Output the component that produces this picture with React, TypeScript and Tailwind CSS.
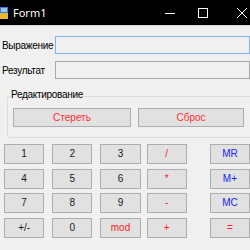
import React from "react";

const Btn = ({ label, color, className }: { label: string; color: string; className?: string }) => (
  <div
    className={`h-[20px] w-[41px] bg-[#e1e1e1] border border-[#adadad] flex items-center justify-center text-[10px] leading-none ${color} ${className ?? ""}`}
  >
    {label}
  </div>
);

export default function App() {
  const rows: { label: string; color: string }[][] = [
    [
      { label: "1", color: "text-[#1a1040]" },
      { label: "2", color: "text-[#1a1a1a]" },
      { label: "3", color: "text-[#1a1a1a]" },
      { label: "/", color: "text-[#ff2020]" },
      { label: "MR", color: "text-[#2020ff]" },
    ],
    [
      { label: "4", color: "text-[#1a1a1a]" },
      { label: "5", color: "text-[#1a1a1a]" },
      { label: "6", color: "text-[#1a1a1a]" },
      { label: "*", color: "text-[#ff2020]" },
      { label: "M+", color: "text-[#2020ff]" },
    ],
    [
      { label: "7", color: "text-[#1a1a1a]" },
      { label: "8", color: "text-[#1a1a1a]" },
      { label: "9", color: "text-[#1a1a1a]" },
      { label: "-", color: "text-[#ff2020]" },
      { label: "MC", color: "text-[#2020ff]" },
    ],
    [
      { label: "+/-", color: "text-[#1a1a1a]" },
      { label: "0", color: "text-[#1a1a1a]" },
      { label: "mod", color: "text-[#ff2020]" },
      { label: "+", color: "text-[#ff2020]" },
      { label: "=", color: "text-[#ff2020]" },
    ],
  ];
  const ml = ["ml-[4px]", "ml-[8px]", "ml-[8px]", "ml-[6px]", "ml-[23px]"];
  return (
    <div className="w-[250px] h-[250px] overflow-hidden bg-[#f0f0f0] font-['Liberation_Sans',sans-serif]">
      {/* title bar */}
      <div className="h-[25px] bg-black flex items-center relative">
        <svg width="8" height="12" viewBox="0 0 8 12" className="ml-0">
          <rect x="0" y="0" width="8" height="6" fill="#3c78d8" />
          <rect x="0" y="6" width="8" height="6" fill="#e8b830" />
          <rect x="1" y="1" width="6" height="4" fill="#9cc4f4" />
        </svg>
        <span className="ml-[5px] text-white text-[11px] font-['Noto_Sans',sans-serif] leading-none">Form1</span>
        <div className="ml-auto flex items-center h-full">
          <svg width="12" height="12" viewBox="0 0 12 12" className="mr-[21px]">
            <line x1="1" y1="6.5" x2="11" y2="6.5" stroke="white" strokeWidth="1" />
          </svg>
          <svg width="12" height="12" viewBox="0 0 12 12" className="mr-[27px]">
            <rect x="1.5" y="1.5" width="9" height="9" fill="none" stroke="white" strokeWidth="1" />
          </svg>
          <svg width="12" height="12" viewBox="0 0 12 12" className="mr-[2px]">
            <line x1="1" y1="1" x2="11" y2="11" stroke="white" strokeWidth="1" />
            <line x1="11" y1="1" x2="1" y2="11" stroke="white" strokeWidth="1" />
          </svg>
        </div>
      </div>
      <div className="h-[1px] bg-[#d8d8d8]" />
      {/* fields */}
      <div className="flex items-center mt-[10px]">
        <span className="w-[56px] pl-[2px] text-[10px] tracking-[-0.3px] text-black whitespace-nowrap">Выражение</span>
        <div className="h-[18px] w-[200px] border border-[#7eb4ea] bg-[#f0f0f0]" />
      </div>
      <div className="flex items-center mt-[7px]">
        <span className="w-[56px] pl-[2px] text-[10px] tracking-[-0.3px] text-black whitespace-nowrap">Результат</span>
        <div className="h-[18px] w-[200px] border border-[#a8a8a8] bg-[#f0f0f0]" />
      </div>
      {/* group */}
      <div className="relative ml-[7px] mt-[17px] w-[250px] h-[42px] border border-[#dcdcdc] rounded-[2px]">
        <span className="absolute left-[2px] top-[-7px] px-[1px] bg-[#f0f0f0] text-[10px] tracking-[-0.3px] leading-none text-black">
          Редактирование
        </span>
        <div className="flex mt-[11px]">
          <div className="ml-[5px] h-[19px] w-[118px] bg-[#e1e1e1] border border-[#adadad] flex items-center justify-center text-[10px] text-[#ff3030]">
            Стереть
          </div>
          <div className="ml-[7px] h-[19px] w-[106px] bg-[#e1e1e1] border border-[#adadad] flex items-center justify-center text-[10px] text-[#ff3030]">
            Сброс
          </div>
        </div>
      </div>
      {/* keypad */}
      <div className="flex flex-col gap-[4.5px] mt-[6px]">
        {rows.map((r, i) => (
          <div key={i} className="flex">
            {r.map((b, j) => (
              <Btn key={j} label={b.label} color={b.color} className={ml[j]} />
            ))}
          </div>
        ))}
      </div>
    </div>
  );
}
